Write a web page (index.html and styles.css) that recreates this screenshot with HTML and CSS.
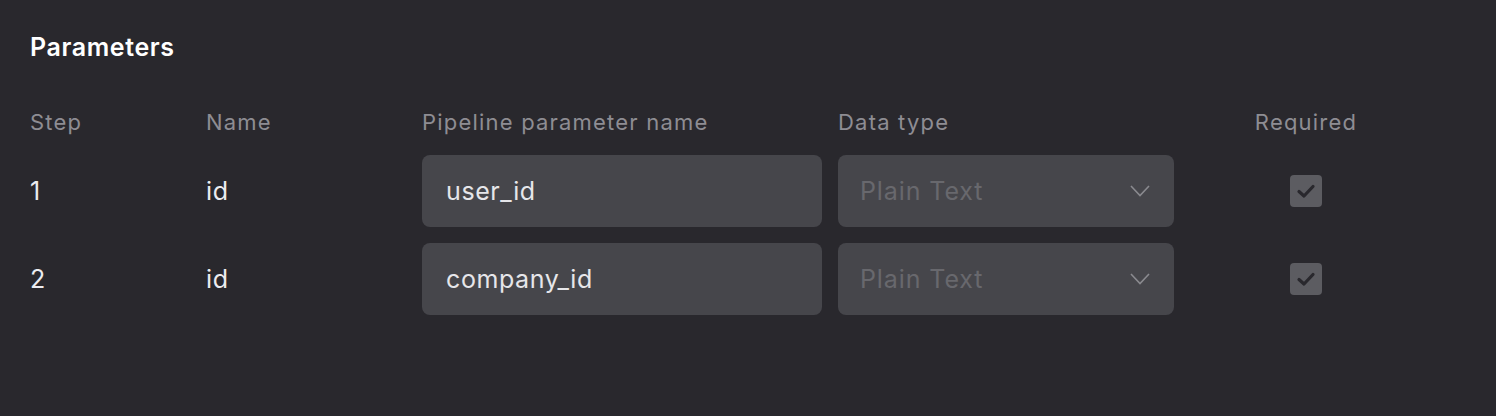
FILE: index.html
```html
<!DOCTYPE html>
<html>
<head>
<meta charset="utf-8">
<link rel="stylesheet" href="styles.css">
</head>
<body>
<section class="panel">
  <h2 class="title">Parameters</h2>
  <div class="grid">
    <div class="head">Step</div>
    <div class="head">Name</div>
    <div class="head">Pipeline parameter name</div>
    <div class="head">Data type</div>
    <div class="head center">Required</div>

    <div class="cell">1</div>
    <div class="cell">id</div>
    <div class="field">user_id</div>
    <div class="field select"><span class="placeholder">Plain Text</span>
      <svg class="chev" width="20" height="12" viewBox="0 0 20 12"><path d="M1 1 L10 10.5 L19 1" fill="none" stroke="#8a8a8f" stroke-width="1.6"/></svg>
    </div>
    <div class="cell center"><span class="check"><svg width="20" height="16" viewBox="0 0 20 16"><path d="M3 8.5 L8 13 L17 3.5" fill="none" stroke="#29282d" stroke-width="3.2" stroke-linecap="round" stroke-linejoin="round"/></svg></span></div>

    <div class="cell">2</div>
    <div class="cell">id</div>
    <div class="field">company_id</div>
    <div class="field select"><span class="placeholder">Plain Text</span>
      <svg class="chev" width="20" height="12" viewBox="0 0 20 12"><path d="M1 1 L10 10.5 L19 1" fill="none" stroke="#8a8a8f" stroke-width="1.6"/></svg>
    </div>
    <div class="cell center"><span class="check"><svg width="20" height="16" viewBox="0 0 20 16"><path d="M3 8.5 L8 13 L17 3.5" fill="none" stroke="#29282d" stroke-width="3.2" stroke-linecap="round" stroke-linejoin="round"/></svg></span></div>
  </div>
</section>
</body>
</html>
```

FILE: styles.css
```css
html, body {
  margin: 0;
  padding: 0;
  background: #29282d;
  height: 100%;
}
body {
  font-family: Inter, "Noto Sans", sans-serif;
  color: #e8e8ec;
}
.panel {
  padding: 32px 30px 0 30px;
}
.title {
  margin: 0 0 46px 0;
  font-size: 25px;
  line-height: 30px;
  font-weight: 600;
  letter-spacing: 0.6px;
  color: #ffffff;
}
.grid {
  display: grid;
  grid-template-columns: 160px 200px 400px 336px 232px;
  column-gap: 16px;
  row-gap: 16px;
  grid-template-rows: 31px 72px 72px;
}
.head {
  align-self: start;
  font-size: 22px;
  line-height: 28px;
  letter-spacing: 1.2px;
  color: #8e8d93;
}
.center { text-align: center; justify-content: center; }
.cell {
  display: flex;
  align-items: center;
  font-size: 25px;
  letter-spacing: 0.7px;
  color: #ececf0;
}
.field {
  display: flex;
  align-items: center;
  background: #46464b;
  border-radius: 8px;
  padding: 0 24px;
  font-size: 25px;
  letter-spacing: 0.6px;
  color: #e6e6ea;
}
.select {
  justify-content: space-between;
  padding-left: 22px;
  padding-right: 24px;
}
.placeholder {
  color: #68686d;
  letter-spacing: 0.9px;
}
.check {
  width: 32px;
  height: 32px;
  border-radius: 4px;
  background: #5c5c61;
  display: flex;
  align-items: center;
  justify-content: center;
}
```
